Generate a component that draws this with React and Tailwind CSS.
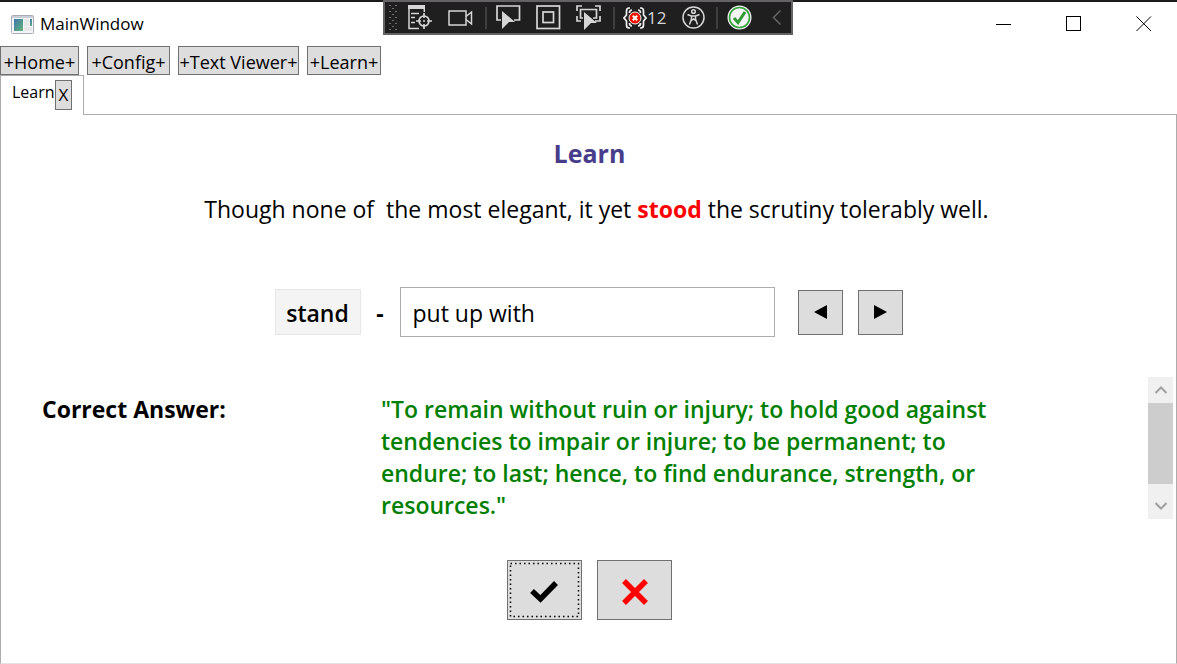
import React from "react";

const NAV = [
  { label: "+Home+", width: "w-[79px]" },
  { label: "+Config+", width: "w-[83px]" },
  { label: "+Text Viewer+", width: "w-[121px]" },
  { label: "+Learn+", width: "w-[74px]" },
];

const ANSWER = [
  '"To remain without ruin or injury; to hold good against',
  "tendencies to impair or injure; to be permanent; to",
  "endure; to last; hence, to find endurance, strength, or",
  'resources."',
];

function AppIcon() {
  return (
    <svg width="23" height="19" viewBox="0 0 23 19" aria-hidden="true">
      <defs>
        <linearGradient id="pane" x1="0" y1="0" x2="1" y2="1">
          <stop offset="0" stopColor="#3f74b0" />
          <stop offset="1" stopColor="#62b877" />
        </linearGradient>
      </defs>
      <rect x="0.5" y="0.5" width="22" height="18" rx="1" fill="#f4f5f7" stroke="#a9adb8" />
      <rect x="1" y="1" width="21" height="2" fill="#c9ced9" />
      <rect x="3" y="4" width="9" height="12" fill="url(#pane)" />
      <rect x="13" y="4" width="5" height="7" fill="#e6e8e8" />
      <rect x="13" y="12" width="8" height="4" fill="#e6e8e8" />
      <rect x="19" y="4" width="2" height="7" fill="url(#pane)" />
    </svg>
  );
}

function Grip() {
  const dots = [];
  for (let row = 0; row < 9; row++) {
    const xs = row % 2 === 0 ? [0, 6] : [3];
    xs.forEach((x) => dots.push(<rect key={`${row}-${x}`} x={x} y={row * 3} width="2" height="1" />));
  }
  return (
    <svg width="9" height="26" viewBox="0 0 9 26" fill="#6e6e6e" aria-hidden="true">
      {dots}
    </svg>
  );
}

function ToolButton({ label, children, className = "" }) {
  return (
    <button type="button" aria-label={label} className={`flex h-6 items-center justify-center ${className}`}>
      {children}
    </button>
  );
}

function Divider() {
  return <span className="h-[22px] w-0.5 bg-[#3f3f3f]" />;
}

const CURSOR = "M0 0 L13 11 H7 L0 18Z";

function DebugToolbar() {
  return (
    <div className="absolute inset-x-0 top-0 flex justify-center pr-px">
      <div className="flex h-[35px] w-[410px] items-center border-2 border-[#646264] bg-[#1f1f1f] px-1 text-[#d6d6d6]">
        <Grip />
        <ToolButton label="Live visual tree" className="ml-[10px]">
          <svg width="24" height="25" viewBox="0 0 24 25" fill="none" stroke="currentColor" strokeWidth="1.5">
            <path d="M0 0H17V4H0Z" fill="currentColor" stroke="none" />
            <path d="M1 0V23.5H11M16.3 4V7M3 8.5H11M3 12.5H7M3 17.5H7" />
            <circle cx="16" cy="16" r="5" strokeWidth="1.7" />
            <circle cx="16" cy="16" r="1" fill="currentColor" stroke="none" />
            <path d="M16 8V13M16 19V24M8 16H13M19 16H24" strokeWidth="1.7" />
          </svg>
        </ToolButton>
        <ToolButton label="Record" className="ml-4">
          <svg width="25" height="18" viewBox="0 0 25 18" fill="none" stroke="currentColor" strokeWidth="1.5">
            <rect x="1" y="2" width="17" height="14" />
            <path d="M18 7.5L23.5 3V15L18 10.5" />
          </svg>
        </ToolButton>
        <span className="w-3" />
        <Divider />
        <ToolButton label="Select element" className="ml-[9px]">
          <svg width="25" height="25" viewBox="0 0 25 25" fill="none" stroke="currentColor" strokeWidth="1.7">
            <path d="M5 15H1V1H23.500V15H18" />
            <path d={CURSOR} transform="translate(6 6)" fill="currentColor" stroke="none" />
          </svg>
        </ToolButton>
        <ToolButton label="Display layout adorners" className="ml-[15px]">
          <svg width="25" height="25" viewBox="0 0 25 25" fill="none" stroke="currentColor" strokeWidth="1.7">
            <rect x="1" y="1" width="22.5" height="22.5" />
            <rect x="7" y="7" width="10.5" height="10.5" />
          </svg>
        </ToolButton>
        <ToolButton label="Track focused element" className="ml-[15px]">
          <svg width="25" height="25" viewBox="0 0 25 25" fill="none" stroke="currentColor" strokeWidth="1.7">
            <path d="M1 6V1H6M19 1H24V6M24 11V16H19M5 16H1V11M7 13H4.500V4.500H20.500V13H17" />
            <path d={CURSOR} transform="translate(8 7)" fill="currentColor" stroke="none" />
          </svg>
        </ToolButton>
        <span className="w-3" />
        <Divider />
        <ToolButton label="12 binding failures" className="ml-2">
          <svg width="24" height="22" viewBox="0 0 24 22" fill="none" stroke="#f0f0f0" strokeWidth="1.7">
            <path d="M7 1H6Q3.500 1 3.500 4V8L1 11L3.500 14V18Q3.500 21 6 21H7M17 1H18Q20.500 1 20.500 4V8L23 11L20.500 14V18Q20.500 21 18 21H17" />
            <path d="M9 3Q6.500 3 6.500 6M15 3Q17.500 3 17.500 6M9 19Q6.500 19 6.500 16M15 19Q17.500 19 17.500 16" />
            <circle cx="12" cy="11" r="6" fill="#f01400" stroke="#f5f5f5" strokeWidth="1" />
            <path d="M9.800 8.800L14.200 13.200M14.200 8.800L9.800 13.200" stroke="#fff" strokeWidth="2" />
          </svg>
          <span className="text-[17px] leading-6">12</span>
        </ToolButton>
        <ToolButton label="Accessibility checker" className="ml-4">
          <svg width="23" height="23" viewBox="0 0 23 23" fill="none" stroke="currentColor" strokeWidth="1.5">
            <circle cx="11.5" cy="11.5" r="10.5" />
            <circle cx="11.5" cy="5.5" r="1.8" />
            <path d="M5.5 8.5L9.5 10V13L7.5 18.5M17.5 8.5L13.5 10V13L15.5 18.5M9.5 10H13.5M9.5 14.5L11.5 13L13.5 14.5" />
          </svg>
        </ToolButton>
        <span className="w-[11px]" />
        <Divider />
        <ToolButton label="Hot reload" className="ml-[9px]">
          <svg width="25" height="25" viewBox="0 0 25 25" fill="none">
            <circle cx="12.5" cy="12.5" r="12" fill="#f4f4f4" />
            <circle cx="12.5" cy="12.5" r="10" stroke="#37a23c" strokeWidth="1.6" />
            <path d="M7 13L11 17.5L18 7" stroke="#2f9a35" strokeWidth="3" />
          </svg>
        </ToolButton>
        <ToolButton label="Collapse toolbar" className="ml-5">
          <svg width="10" height="15" viewBox="0 0 10 15" fill="none" stroke="#6a6a6a" strokeWidth="1.4">
            <path d="M8.5 0.5L1.5 7.5L8.5 14.5" />
          </svg>
        </ToolButton>
      </div>
    </div>
  );
}

function TitleBar() {
  return (
    <header className="flex h-[46px] items-center justify-between border-t-2 border-[#1c1b1c] pl-[11px] pr-[25px]">
      <div className="flex items-center gap-1.5">
        <AppIcon />
        <h1 className="text-[17px] leading-6">MainWindow</h1>
      </div>
      <div className="relative z-10 flex items-center gap-[54px]">
        <button type="button" aria-label="Minimize">
          <svg width="16" height="16" viewBox="0 0 16 16" stroke="#000" shapeRendering="crispEdges">
            <path d="M0 8.5H15" />
          </svg>
        </button>
        <button type="button" aria-label="Maximize">
          <svg width="16" height="16" viewBox="0 0 16 16" fill="none" stroke="#000" shapeRendering="crispEdges">
            <rect x="0.5" y="0.5" width="14" height="14" />
          </svg>
        </button>
        <button type="button" aria-label="Close">
          <svg width="16" height="16" viewBox="0 0 16 16" stroke="#000" strokeWidth="1">
            <path d="M0.5 0.5L15 15M15 0.5L0.5 15" />
          </svg>
        </button>
      </div>
    </header>
  );
}

function GreyButton({ className, children, ...rest }) {
  return (
    <button type="button" className={`flex items-center justify-center border border-[#707070] bg-[#dddddd] ${className}`} {...rest}>
      {children}
    </button>
  );
}

function ScrollBar() {
  return (
    <div className="flex w-[25px] flex-col bg-[#f0f0f0]">
      <button type="button" aria-label="Scroll up" className="flex h-[26px] items-center justify-center">
        <svg width="12" height="8" viewBox="0 0 12 8" fill="none" stroke="#a0a0a0" strokeWidth="2">
          <path d="M0.5 7L6 1.5L11.5 7" />
        </svg>
      </button>
      <div className="h-[81px] bg-[#cdcdcd]" />
      <div className="flex-1" />
      <button type="button" aria-label="Scroll down" className="flex h-[26px] items-center justify-center">
        <svg width="12" height="8" viewBox="0 0 12 8" fill="none" stroke="#a0a0a0" strokeWidth="2">
          <path d="M0.5 1L6 6.5L11.5 1" />
        </svg>
      </button>
    </div>
  );
}

export default function App() {
  return (
    <div className="relative flex min-h-screen flex-col bg-white font-['Open_Sans','Noto_Sans',sans-serif] text-black">
      <TitleBar />
      <DebugToolbar />
      <nav className="flex gap-2">
        {NAV.map((item) => (
          <GreyButton key={item.label} className={`h-[29px] whitespace-nowrap pt-0.5 text-[18px] leading-6 ${item.width}`}>
            {item.label}
          </GreyButton>
        ))}
      </nav>
      <div className="flex h-10">
        <div className="flex w-[84px] items-start border-x border-t border-[#acacac] pl-[11px] pt-1">
          <span className="w-[43px] text-base leading-6">Learn</span>
          <GreyButton className="h-[30px] w-[17px] text-[17px]" aria-label="Close tab">
            X
          </GreyButton>
        </div>
        <div className="flex-1 border-b border-[#acacac]" />
      </div>
      <main className="flex flex-1 flex-col border-x border-b border-x-[#acacac] border-b-[#e3e3e3] pb-[43px]">
        <h2 className="mt-[22px] pl-0.5 text-center text-[25px] font-bold leading-8 text-[#483d8b]">Learn</h2>
        <p className="mt-6 whitespace-pre-wrap pl-4 text-center text-[23px] leading-8">
          {"Though none of  the most elegant, it yet "}
          <strong className="font-bold text-[#ff0000]">stood</strong>
          {" the scrutiny tolerably well."}
        </p>
        <div className="mt-[62px] flex items-center justify-center text-[23px]">
          <label htmlFor="meaning" className="flex h-[46px] w-[86px] items-center justify-center border border-[#e6e6e6] bg-[#f4f4f4] pt-0.5 font-semibold">
            stand
          </label>
          <span className="w-[39px] pt-0.5 text-center font-bold">-</span>
          <input id="meaning" defaultValue="put up with" className="h-[50px] w-[375px] border border-[#abadb3] bg-white px-3 pt-0.5 outline-none" />
          <GreyButton className="ml-[23px] size-[45px]" aria-label="Previous">
            <svg width="13" height="14" viewBox="0 0 13 14">
              <path d="M0 7L13 0V14Z" />
            </svg>
          </GreyButton>
          <GreyButton className="ml-[15px] size-[45px]" aria-label="Next">
            <svg width="13" height="14" viewBox="0 0 13 14">
              <path d="M13 7L0 0V14Z" />
            </svg>
          </GreyButton>
        </div>
        <section className="mt-10 flex h-[142px] pl-[41px] pr-[3px] text-[23px] leading-8">
          <h3 className="w-[339px] pt-4 font-bold">Correct Answer:</h3>
          <p className="flex-1 whitespace-nowrap pt-4 font-semibold text-[#008000]">
            {ANSWER.map((line) => (
              <span key={line} className="block">
                {line}
              </span>
            ))}
          </p>
          <ScrollBar />
        </section>
        <div className="mt-[41px] flex justify-center gap-[15px] pl-0.5">
          <GreyButton className="h-[60px] w-[75px]" aria-label="Correct">
            <svg width="75" height="60" viewBox="0 0 75 60" fill="none" className="-m-px shrink-0">
              <rect x="3.5" y="3.5" width="68" height="53" stroke="#000" strokeWidth="1.5" strokeDasharray="1.5 3" />
              <path d="M25 31L33.500 39L49 23" stroke="#000" strokeWidth="5.5" />
            </svg>
          </GreyButton>
          <GreyButton className="h-[60px] w-[75px] pt-1" aria-label="Wrong">
            <svg width="28" height="28" viewBox="0 0 28 28" fill="none" stroke="#ff0000" strokeWidth="5.5">
              <path d="M3 3L25 25M25 3L3 25" />
            </svg>
          </GreyButton>
        </div>
      </main>
    </div>
  );
}
